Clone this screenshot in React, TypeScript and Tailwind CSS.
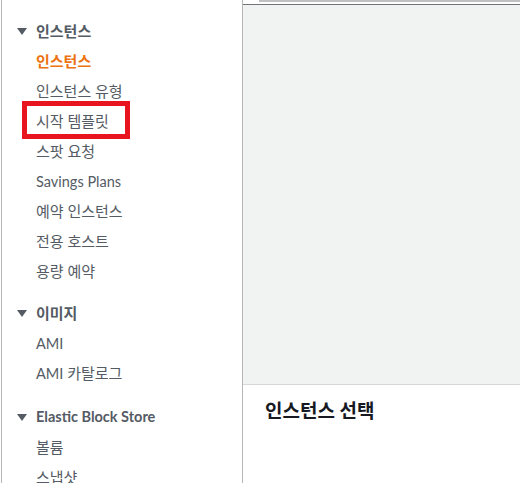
import React from "react";

const Tri = () => (
  <svg width="10" height="7" viewBox="0 0 10 7" className="shrink-0">
    <polygon points="0,0 10,0 5,7" fill="#545b64" />
  </svg>
);

const Header = ({ label, latin }: { label: string; latin?: boolean }) => (
  <div className="h-[30px] flex items-center pl-[15px] gap-[9px]">
    <Tri />
    <span className={"font-bold text-[#545b64] leading-[30px] " + (latin ? "text-[14.5px]" : "text-[15px]")}>
      {label}
    </span>
  </div>
);

const Item = ({
  children,
  active,
  boxed,
}: {
  children: React.ReactNode;
  active?: boolean;
  boxed?: boolean;
}) => (
  <div className="relative h-[30px] pl-[34px] leading-[30px] whitespace-nowrap">
    <span className={"text-[15px] " + (active ? "text-[#ec7211] font-bold" : "text-[#545b64]")}>
      {children}
    </span>
    {boxed && (
      <div className="absolute left-[20px] top-[-5px] w-[108px] h-[38px] border-[5px] border-[#e8141e]" />
    )}
  </div>
);

export default function App() {
  return (
    <div
      className="w-[520px] h-[483px] overflow-hidden flex bg-white pl-px"
      style={{ fontFamily: '"Lato", "Noto Sans CJK KR", sans-serif' }}
    >
      <aside className="w-[242px] shrink-0 border-l border-r border-[#b6b6b6] pt-[16px] block">
        <Header label="인스턴스" />
        <Item active>인스턴스</Item>
        <Item>인스턴스 유형</Item>
        <Item boxed>시작 템플릿</Item>
        <Item>스팟 요청</Item>
        <Item>
          <span className="text-[14.5px]">Savings Plans</span>
        </Item>
        <Item>예약 인스턴스</Item>
        <Item>전용 호스트</Item>
        <Item>용량 예약</Item>
        <div className="h-[12px]" />
        <Header label="이미지" />
        <Item>
          <span className="text-[14.5px]">AMI</span>
        </Item>
        <Item>
          <span className="text-[14.5px]">AMI</span> 카탈로그
        </Item>
        <div className="h-[14px]" />
        <Header label="Elastic Block Store" latin />
        <Item>볼륨</Item>
        <Item>스냅샷</Item>
      </aside>
      <main className="flex-1 flex flex-col">
        <div className="h-[4px] pl-[16px] shrink-0">
          <div className="h-[2px] bg-[#c0c0c0]" />
        </div>
        <div className="h-[1px] bg-[#6e7579] shrink-0" />
        <div className="h-[380px] shrink-0 bg-[#f1f2f2] border-b border-[#d5d8d8]" />
        <div className="flex-1 bg-white pt-[12px] pl-[22px]">
          <h2 className="font-bold text-[19px] text-[#16191f]">인스턴스 선택</h2>
        </div>
      </main>
    </div>
  );
}
